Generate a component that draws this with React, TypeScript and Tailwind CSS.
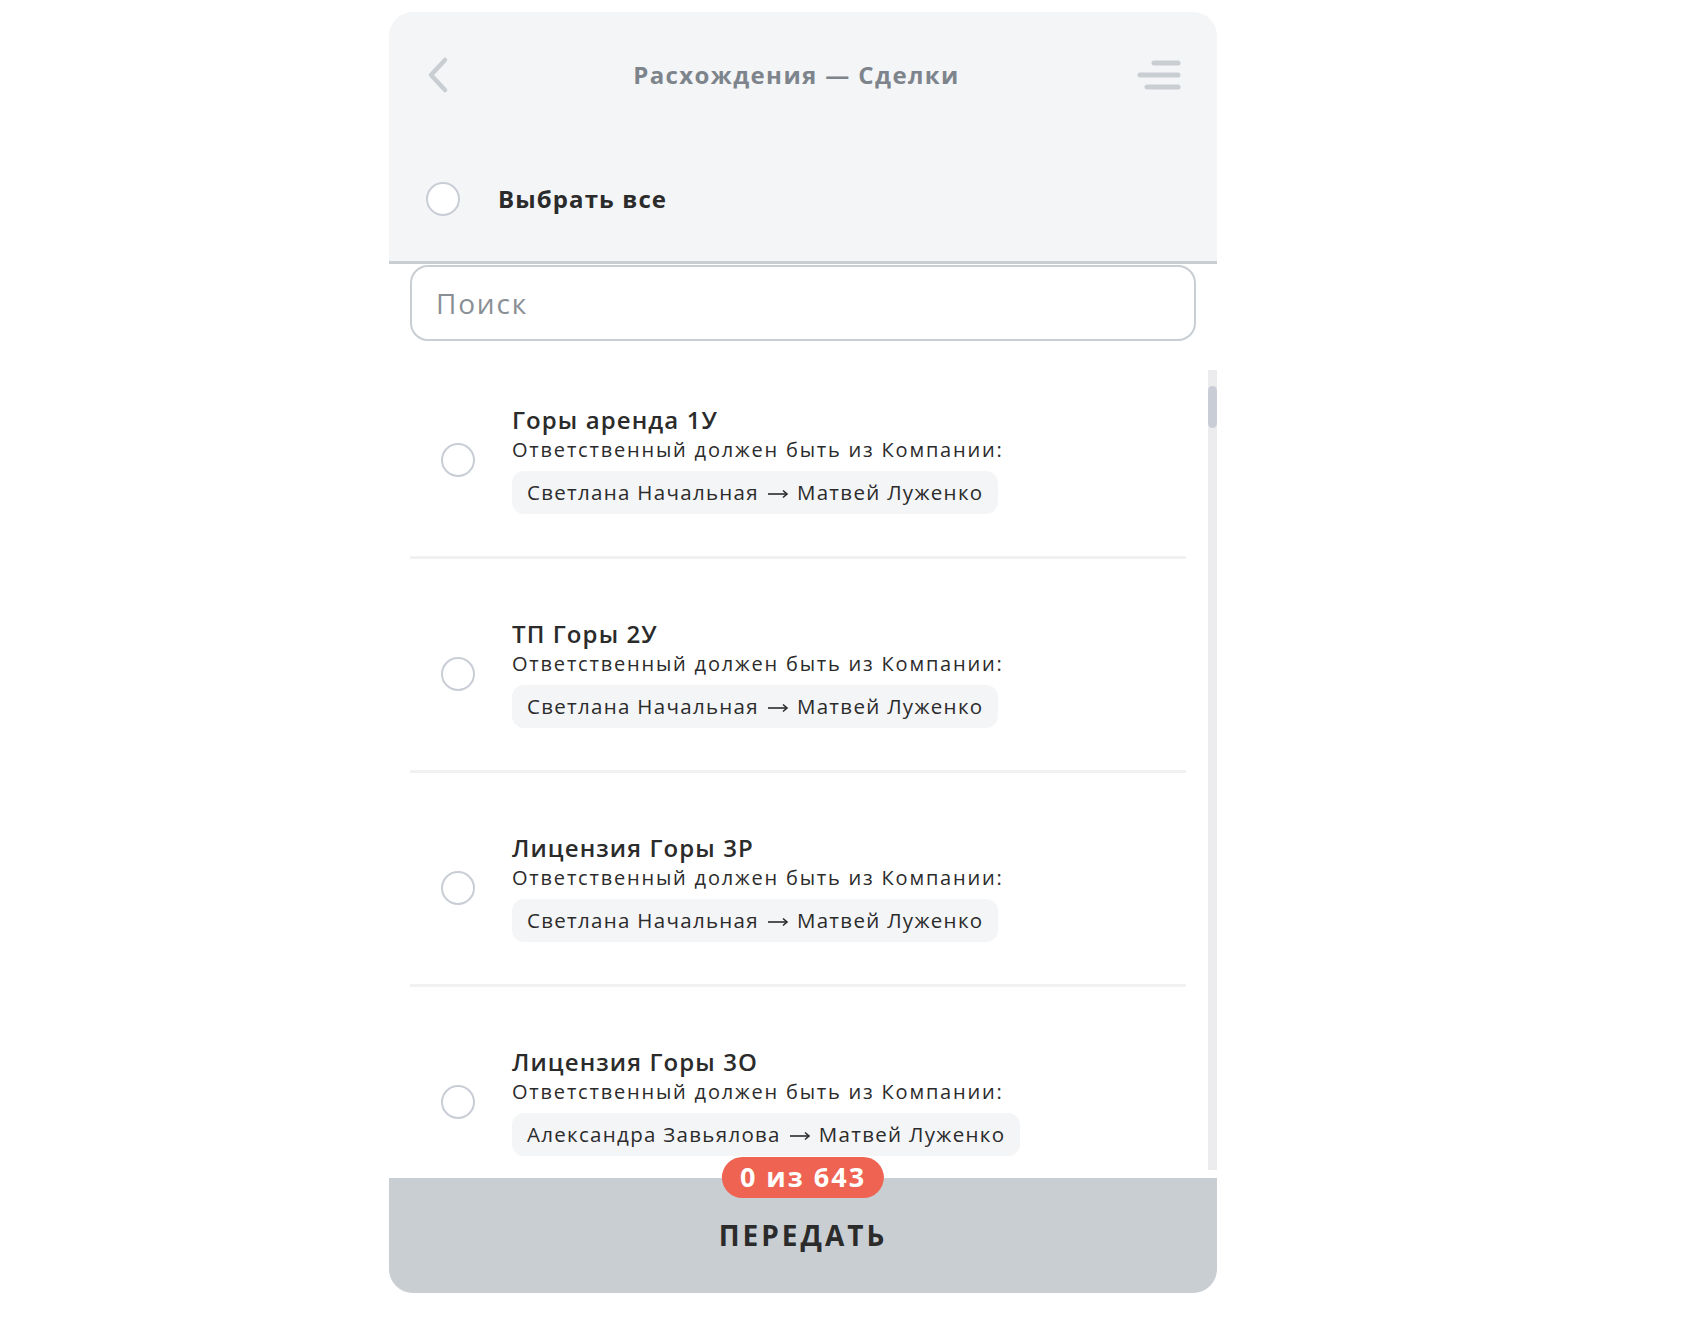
import React from 'react';

const items = [
  { title: 'Горы аренда 1У', from: 'Светлана Начальная', to: 'Матвей Луженко' },
  { title: 'ТП Горы 2У', from: 'Светлана Начальная', to: 'Матвей Луженко' },
  { title: 'Лицензия Горы 3Р', from: 'Светлана Начальная', to: 'Матвей Луженко' },
  { title: 'Лицензия Горы 3О', from: 'Александра Завьялова', to: 'Матвей Луженко' },
];

function Radio() {
  return <div className="w-[34px] h-[34px] rounded-full border-[2.5px] border-[#c9ced6] bg-white shrink-0" />;
}

function Arrow() {
  return (
    <svg width="22" height="12" viewBox="0 0 22 12" fill="none" className="mx-[8px] mt-[3px]">
      <line x1="1" y1="6" x2="20" y2="6" stroke="#2b2b2b" strokeWidth="1.6" />
      <polyline points="16,2.5 20,6 16,9.5" stroke="#2b2b2b" strokeWidth="1.6" fill="none" />
    </svg>
  );
}

function MenuIcon() {
  return (
    <svg width="44" height="32" viewBox="0 0 44 32" fill="none">
      <line x1="17" y1="4" x2="41" y2="4" stroke="#c9ced3" strokeWidth="5" strokeLinecap="round" />
      <line x1="3" y1="16" x2="41" y2="16" stroke="#c9ced3" strokeWidth="5" strokeLinecap="round" />
      <line x1="10" y1="28" x2="41" y2="28" stroke="#c9ced3" strokeWidth="5" strokeLinecap="round" />
    </svg>
  );
}

export default function App() {
  return (
    <div className="min-h-screen bg-white pt-[12px] font-['Open_Sans',sans-serif]">
      <div className="w-[828px] ml-[389px] rounded-[24px] overflow-hidden flex flex-col h-[1281px]">
        <div className="bg-[#f4f5f7] border-b-[3px] border-[#c9ced3] h-[252px] flex flex-col shrink-0">
          <div className="flex items-center justify-between h-[126px] pl-[37px] pr-[36px]">
            <svg width="24" height="38" viewBox="0 0 24 38" fill="none">
              <polyline points="19,4 5,19 19,34" stroke="#c9ced3" strokeWidth="4.5" strokeLinecap="round" strokeLinejoin="round" />
            </svg>
            <h1 className="text-[24px] font-bold text-[#7d848c] tracking-[1.4px] mr-[-6px]">Расхождения — Сделки</h1>
            <MenuIcon />
          </div>
          <div className="flex items-center pl-[37px] gap-[38px] h-[60px] mt-[31px]">
            <Radio />
            <span className="text-[24px] font-bold text-[#2b2b2b] tracking-[1.1px]">Выбрать все</span>
          </div>
        </div>

        <div className="px-[21px] pt-[1px] shrink-0">
          <div className="h-[76px] rounded-[18px] border-2 border-[#c9ced3] flex items-center pl-[24px]">
            <span className="text-[28px] text-[#8a8f95] tracking-[1.8px]">Поиск</span>
          </div>
        </div>

        <div className="flex flex-1 min-h-0 relative pt-[4px]">
          <div className="flex-1 pl-[21px] overflow-hidden">
            {items.map((it, i) => (
              <div key={i} className="h-[214px] border-b-[3px] border-[#f0f1f3] flex items-center pt-[18px] w-[776px] shrink-0">
                <div className="w-[102px] pl-[31px] shrink-0 flex">
                  <Radio />
                </div>
                <div className="flex flex-col">
                  <div className="text-[24px] font-semibold text-[#2b2b2b] leading-[30px] tracking-[1.1px]">{it.title}</div>
                  <div className="text-[20px] text-[#2b2b2b] leading-[29px] tracking-[1.8px]">Ответственный должен быть из Компании:</div>
                  <div className="mt-[7px] self-start bg-[#f4f5f7] rounded-[12px] h-[43px] px-[15px] flex items-center text-[20.5px] text-[#2b2b2b] tracking-[1.3px]">
                    <span>{it.from}</span>
                    <Arrow />
                    <span>{it.to}</span>
                  </div>
                </div>
              </div>
            ))}
          </div>
          <div className="w-[9px] mt-[25px] mb-[8px] bg-[#ececee] relative">
            <div className="absolute top-[16px] left-0 w-[9px] h-[42px] rounded-full bg-[#c9ced6]" />
          </div>
        </div>

        <div className="relative h-[115px] bg-[#c9ced3] flex items-center justify-center shrink-0">
          <div className="absolute top-[-21px] left-1/2 -translate-x-1/2 h-[41px] px-[18px] rounded-full bg-[#ee6352] flex items-center">
            <span className="text-[27px] font-bold text-white tracking-[2px]">0 из 643</span>
          </div>
          <span className="text-[28px] font-bold text-[#2b2b2b] tracking-[3px] mt-[-2px]">ПЕРЕДАТЬ</span>
        </div>
      </div>
    </div>
  );
}
